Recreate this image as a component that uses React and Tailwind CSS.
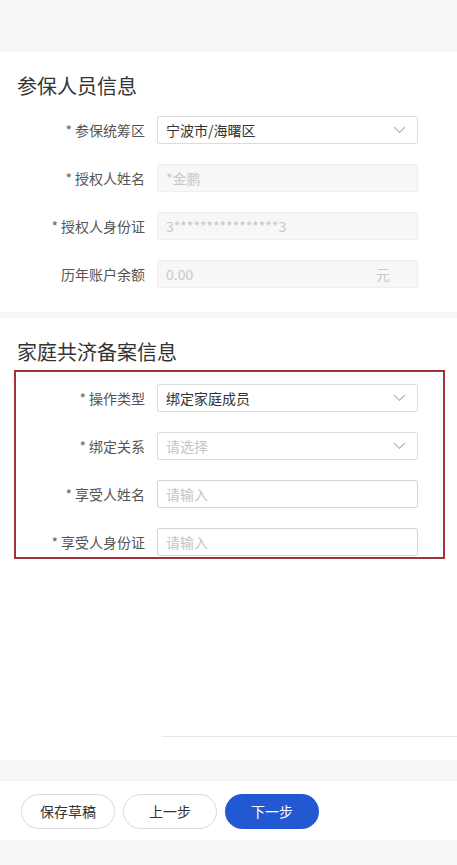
const font = { fontFamily: '"Noto Sans CJK SC", "Noto Sans", sans-serif' };

function Chevron() {
  return (
    <svg width="13" height="8" viewBox="0 0 13 8" className="mr-[11px] shrink-0">
      <polyline points="1,1 6.5,6.5 12,1" fill="none" stroke="#b8b8b8" strokeWidth="1.2" />
    </svg>
  );
}

function Field({ label, labelW, required = true, children }) {
  return (
    <div className="flex items-center h-[28px]">
      <div
        className="text-right text-[14px] text-[#555] shrink-0"
        style={{ width: labelW }}
      >
        {required && <span className="text-[#666] mr-[3px]">*</span>}
        {label}
      </div>
      <div className="ml-[12px] w-[261px] h-[28px]">{children}</div>
    </div>
  );
}

function SelectBox({ value, placeholder }) {
  return (
    <div className="h-full flex items-center justify-between border border-[#dcdcdc] bg-white rounded-[2px]">
      <span className={`pl-[8px] text-[14px] ${value ? 'text-[#333]' : 'text-[#c4c4c4]'}`}>
        {value || placeholder}
      </span>
      <Chevron />
    </div>
  );
}

function TextBox({ placeholder }) {
  return (
    <div className="h-full flex items-center border border-[#d6d6d6] bg-white rounded-[2px]">
      <span className="pl-[8px] text-[14px] text-[#c4c4c4]">{placeholder}</span>
    </div>
  );
}

function DisabledBox({ value, suffix }) {
  return (
    <div className="h-full flex items-center justify-between border border-[#efefef] bg-[#f7f7f7] rounded-[2px]">
      <span className="pl-[8px] text-[14px] text-[#c8c8c8]">{value}</span>
      {suffix && <span className="pr-[27px] text-[14px] text-[#c8c8c8]">{suffix}</span>}
    </div>
  );
}

export default function App() {
  return (
    <div className="w-[457px] h-[865px] flex flex-col bg-[#f5f6f8] overflow-hidden" style={font}>
      <div className="h-[52px] shrink-0" />

      {/* 参保人员信息 */}
      <section className="bg-white pt-[20px] pb-[24px]">
        <h2 className="pl-[17px] text-[20px] leading-[28px] text-[#333]">参保人员信息</h2>
        <div className="mt-[16px] flex flex-col gap-[20px]">
          <Field label="参保统筹区" labelW={145}>
            <SelectBox value="宁波市/海曙区" />
          </Field>
          <Field label="授权人姓名" labelW={145}>
            <DisabledBox value="*金鹏" />
          </Field>
          <Field label="授权人身份证" labelW={145}>
            <DisabledBox value="3****************3" />
          </Field>
          <Field label="历年账户余额" labelW={145} required={false}>
            <DisabledBox value="0.00" suffix="元" />
          </Field>
        </div>
      </section>

      <div className="h-[6px] shrink-0" />

      {/* 家庭共济备案信息 */}
      <section className="bg-white pt-[20px] flex-1 flex flex-col">
        <h2 className="pl-[17px] text-[20px] leading-[28px] text-[#333]">家庭共济备案信息</h2>
        <div className="mt-[4px] ml-[14px] w-[431px] border-2 border-[#a3323b] pt-[12px] pb-[1px] flex flex-col gap-[20px]">
          <Field label="操作类型" labelW={129}>
            <SelectBox value="绑定家庭成员" />
          </Field>
          <Field label="绑定关系" labelW={129}>
            <SelectBox placeholder="请选择" />
          </Field>
          <Field label="享受人姓名" labelW={129}>
            <TextBox placeholder="请输入" />
          </Field>
          <Field label="享受人身份证" labelW={129}>
            <TextBox placeholder="请输入" />
          </Field>
        </div>
        <div className="h-[177px] shrink-0" />
        <div className="ml-[162px] border-t border-[#e8e8e8]" />
        <div className="flex-1" />
      </section>

      <div className="h-[20px] shrink-0" />

      {/* Footer */}
      <footer className="bg-white h-[60px] shrink-0 border-t border-[#eeeeee] pt-[13px] pl-[21px] flex gap-[8px] items-start">
        <button className="w-[94px] h-[35px] rounded-full border border-[#d9d9d9] bg-white text-[14px] text-[#333]">
          保存草稿
        </button>
        <button className="w-[94px] h-[35px] rounded-full border border-[#d9d9d9] bg-white text-[14px] text-[#333]">
          上一步
        </button>
        <button className="w-[94px] h-[35px] rounded-full bg-[#2259d2] text-[14px] text-white">
          下一步
        </button>
      </footer>

      <div className="h-[25px] shrink-0" />
    </div>
  );
}
